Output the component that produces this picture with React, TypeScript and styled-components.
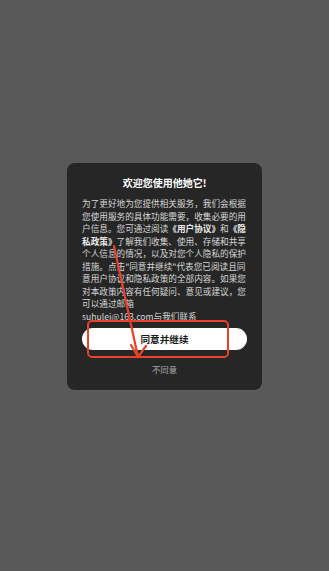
import { createGlobalStyle, styled } from 'styled-components';

const GlobalStyle = createGlobalStyle`
    html, body {
        margin: 0;
        padding: 0;
        background: #595959;
    }
    * {
        box-sizing: border-box;
    }
`;

const Page = styled.div`
    position: relative;
    width: 329px;
    height: 571px;
    background: #595959;
    display: flex;
    justify-content: center;
    padding-top: 163px;
    font-family: 'Noto Sans CJK SC', 'Noto Sans', sans-serif;
`;

const Dialog = styled.div`
    width: 195px;
    height: 227px;
    background: #262626;
    border-radius: 8px;
    padding: 13px 15px 15px;
    display: flex;
    flex-direction: column;
    align-items: center;
`;

const Title = styled.div`
    font-size: 10px;
    line-height: 14px;
    font-weight: 700;
    color: #ffffff;
    margin-bottom: 7px;
`;

const Body = styled.p`
    margin: 0;
    width: 165px;
    font-size: 8.65px;
    line-height: 12.5px;
    color: #d6d6d6;
    text-spacing-trim: space-all;
`;

const Strong = styled.b`
    font-weight: 700;
    color: #ececec;
`;

const AgreeButton = styled.button`
    margin-top: 6px;
    width: 165px;
    height: 22px;
    border: none;
    border-radius: 11px;
    background: #ffffff;
    color: #1c1c1c;
    font-family: inherit;
    font-size: 9.6px;
    font-weight: 700;
    padding: 0;
    display: flex;
    align-items: center;
    justify-content: center;
`;

const RefuseLink = styled.div`
    margin-top: 13px;
    font-size: 8.4px;
    line-height: 12px;
    color: #a8a8a8;
`;

const Annotation = styled.svg`
    position: absolute;
    left: 0;
    top: 0;
    pointer-events: none;
`;

const ANNOTATION_RED = '#e8412c';

export default function App() {
    return (
        <>
            <GlobalStyle />
            <Page>
                <Dialog>
                    <Title>欢迎您使用他她它!</Title>
                    <Body>
                        为了更好地为您提供相关服务，我们会根据您使用服务的具体功能需要，收集必要的用户信息。您可通过阅读
                        <Strong>《用户协议》</Strong>和<Strong>《隐私政策》</Strong>
                        了解我们收集、使用、存储和共享个人信息的情况，以及对您个人隐私的保护措施。点击"同意并继续"代表您已阅读且同意用户协议和隐私政策的全部内容。如果您对本政策内容有任何疑问、意见或建议，您可以通过邮箱
                        <br />
                        suhulei@163.com与我们联系
                    </Body>
                    <AgreeButton>同意并继续</AgreeButton>
                    <RefuseLink>不同意</RefuseLink>
                </Dialog>
                <Annotation width="329" height="571" viewBox="0 0 329 571">
                    <rect
                        x="88"
                        y="321"
                        width="140"
                        height="36"
                        rx="4"
                        fill="none"
                        stroke={ANNOTATION_RED}
                        strokeWidth="2"
                    />
                    <g stroke={ANNOTATION_RED} strokeWidth="2.2" strokeLinecap="round" fill="none">
                        <line x1="114" y1="246" x2="138" y2="357" />
                        <line x1="131" y1="345" x2="138" y2="357" />
                        <line x1="146" y1="346" x2="138" y2="357" />
                    </g>
                </Annotation>
            </Page>
        </>
    );
}
